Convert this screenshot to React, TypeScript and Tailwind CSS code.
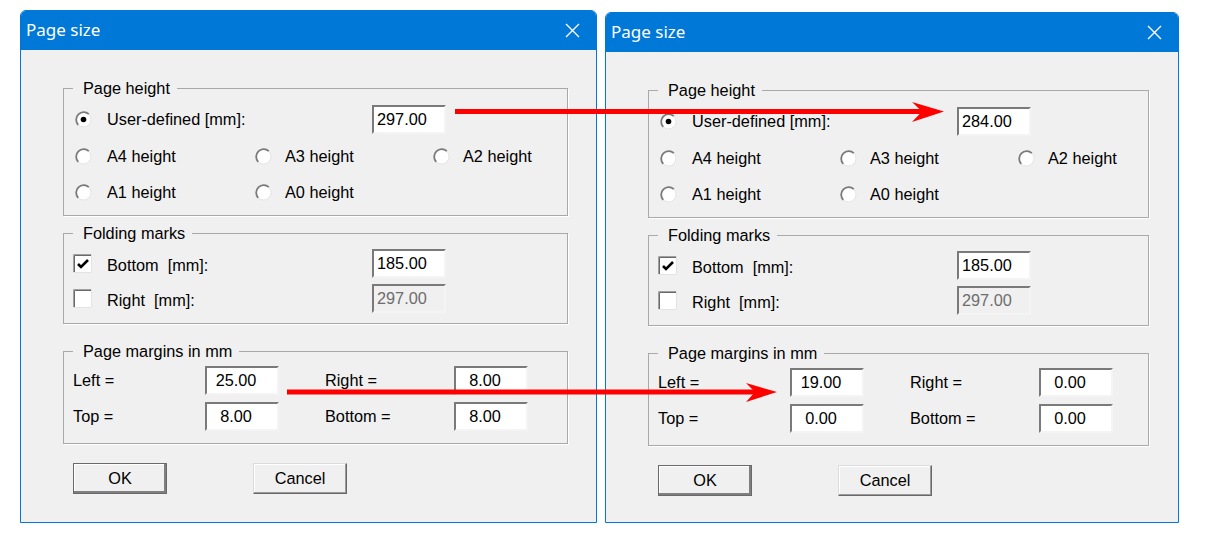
import React from 'react';

type Values = {
  height: string;
  bottom: string;
  right: string;
  left: string;
  top: string;
  mRight: string;
  mBottom: string;
};

function Radio({ checked = false }: { checked?: boolean }) {
  return (
    <svg width="17" height="17" viewBox="0 0 17 17" className="shrink-0">
      <circle cx="8.5" cy="8.5" r="7.5" fill="#fff" stroke="#e3e3e3" strokeWidth="1" />
      <path d="M 3.2 13.8 A 7.5 7.5 0 0 1 13.8 3.2" stroke="#7a7a7a" strokeWidth="1.8" fill="none" />
      {checked && <circle cx="8.5" cy="8.5" r="2.8" fill="#000" />}
    </svg>
  );
}

function Checkbox({ checked = false }: { checked?: boolean }) {
  return (
    <svg width="19" height="19" viewBox="0 0 19 19" className="shrink-0">
      <rect x="0" y="0" width="19" height="19" fill="#fff" />
      <path d="M 0.5 19 L 0.5 0.5 L 19 0.5" stroke="#a0a0a0" strokeWidth="1" fill="none" />
      <path d="M 1.5 18 L 1.5 1.5 L 18 1.5" stroke="#696969" strokeWidth="1" fill="none" />
      <path d="M 18.5 0 L 18.5 18.5 L 0 18.5" stroke="#e3e3e3" strokeWidth="1" fill="none" />
      {checked && <path d="M 5 10 L 8 13 L 15 6" stroke="#000" strokeWidth="2.6" fill="none" />}
    </svg>
  );
}

function Field({ value, disabled = false, centered = false }: { value: string; disabled?: boolean; centered?: boolean }) {
  return (
    <div
      className={`w-[74px] h-[29px] flex items-center border-2 border-t-[#7a7a7a] border-l-[#7a7a7a] border-b-[#f4f4f4] border-r-[#f4f4f4] ${
        disabled ? 'bg-[#f0f0f0] text-[#6d6d6d]' : 'bg-white text-black'
      } ${centered ? 'justify-center pr-[12px]' : 'pl-[3px]'}`}
    >
      {value}
    </div>
  );
}

function Button({ label, isDefault = false, className = '' }: { label: string; isDefault?: boolean; className?: string }) {
  return (
    <div
      className={`w-[94px] h-[31px] flex items-center justify-center bg-[#f0f0f0] ${
        isDefault
          ? 'border border-[#6a6a6a] shadow-[inset_-2px_-2px_0_#7f7f7f,inset_1px_1px_0_#fff]'
          : 'border border-t-[#dcdcdc] border-l-[#dcdcdc] border-r-[#696969] border-b-[#696969] shadow-[inset_-1px_-1px_0_#9a9a9a,inset_1px_1px_0_#fff]'
      } ${className}`}
    >
      {label}
    </div>
  );
}

function Group({ title, className = '', children }: { title: string; className?: string; children: React.ReactNode }) {
  return (
    <fieldset className={`border border-[#a9a9a9] shadow-[1px_1px_0_#fff] ${className}`}>
      <legend className="ml-[9px] pl-[10px] pr-[7px] leading-[20px]">{title}</legend>
      {children}
    </fieldset>
  );
}

function Dialog({ v, className = '', groupWidth }: { v: Values; className?: string; groupWidth: string }) {
  return (
    <div className={`flex flex-col border border-[#0078d7] rounded-t-[6px] bg-[#f0f0f0] overflow-hidden ${className}`}>
      <div className="h-[39px] shrink-0 bg-[#0078d7] flex items-center justify-between pl-[5px] pr-[16px]">
        <span className="font-['Noto_Sans',sans-serif] text-[17px] text-white leading-none pb-[2px]">Page size</span>
        <svg width="15" height="15" viewBox="0 0 15 15">
          <path d="M 1 1 L 14 14 M 14 1 L 1 14" stroke="#fff" strokeWidth="1.4" />
        </svg>
      </div>
      <div className="flex-1 pl-[42px] pt-[28px] text-[16.3px] text-black">
        <Group title="Page height" className={groupWidth}>
          <div className="pl-[11px] pt-[6px] pb-[5px]">
            <div className="h-[30px] flex items-center">
              <div className="w-[297px] flex items-center">
                <Radio checked />
                <span className="ml-[15px]">User-defined [mm]:</span>
              </div>
              <Field value={v.height} />
            </div>
            <div className="h-[36px] mt-[4px] flex items-center">
              <div className="w-[180px] flex items-center">
                <Radio />
                <span className="ml-[15px]">A4 height</span>
              </div>
              <div className="w-[178px] flex items-center">
                <Radio />
                <span className="ml-[13px]">A3 height</span>
              </div>
              <div className="flex items-center">
                <Radio />
                <span className="ml-[13px]">A2 height</span>
              </div>
            </div>
            <div className="h-[36px] flex items-center">
              <div className="w-[180px] flex items-center">
                <Radio />
                <span className="ml-[15px]">A1 height</span>
              </div>
              <div className="flex items-center">
                <Radio />
                <span className="ml-[13px]">A0 height</span>
              </div>
            </div>
          </div>
        </Group>

        <Group title="Folding marks" className={`mt-[7px] ${groupWidth}`}>
          <div className="pl-[9px] pt-[6px] pb-[10px]">
            <div className="h-[29px] flex items-center">
              <div className="w-[299px] flex items-center">
                <Checkbox checked />
                <span className="ml-[15px] pt-[3px]">Bottom&nbsp; [mm]:</span>
              </div>
              <Field value={v.bottom} />
            </div>
            <div className="h-[29px] mt-[6px] flex items-center">
              <div className="w-[299px] flex items-center">
                <Checkbox />
                <span className="ml-[15px] pt-[3px]">Right&nbsp; [mm]:</span>
              </div>
              <Field value={v.right} disabled />
            </div>
          </div>
        </Group>

        <Group title="Page margins in mm" className={`mt-[17px] ${groupWidth}`}>
          <div className="pl-[9px] pt-[5px] pb-[12px]">
            <div className="h-[29px] flex items-center">
              <span className="w-[132px]">Left =</span>
              <Field value={v.left} centered />
              <span className="ml-[46px] w-[129px]">Right =</span>
              <Field value={v.mRight} centered />
            </div>
            <div className="h-[29px] mt-[7px] flex items-center">
              <span className="w-[132px]">Top =</span>
              <Field value={v.top} centered />
              <span className="ml-[46px] w-[129px]">Bottom =</span>
              <Field value={v.mBottom} centered />
            </div>
          </div>
        </Group>

        <div className="mt-[19px] flex items-center">
          <Button label="OK" isDefault className="ml-[10px]" />
          <Button label="Cancel" className="ml-[86px]" />
        </div>
      </div>
    </div>
  );
}

export default function App() {
  const before: Values = { height: '297.00', bottom: '185.00', right: '297.00', left: '25.00', top: '8.00', mRight: '8.00', mBottom: '8.00' };
  const after: Values = { height: '284.00', bottom: '185.00', right: '297.00', left: '19.00', top: '0.00', mRight: '0.00', mBottom: '0.00' };

  return (
    <div className="relative w-[1219px] h-[549px] bg-white overflow-hidden font-['Liberation_Sans',Arial,sans-serif]">
      <div className="flex items-start pl-[20px] pt-[10px] gap-[8px]">
        <Dialog v={before} groupWidth="w-[505px]" className="w-[577px] h-[513px]" />
        <Dialog v={after} groupWidth="w-[501px]" className="w-[574px] h-[511px] mt-[2px]" />
      </div>
      <svg className="absolute inset-0 pointer-events-none" width="1219" height="549" viewBox="0 0 1219 549">
        <line x1="455" y1="111.5" x2="925" y2="111.5" stroke="#ff0000" strokeWidth="5" />
        <polygon points="944,111.5 912,102 922,111.5 912,122" fill="#ff0000" />
        <line x1="287" y1="392" x2="760" y2="392" stroke="#ff0000" strokeWidth="5" />
        <polygon points="777,392 746,383 755,392 746,402" fill="#ff0000" />
      </svg>
    </div>
  );
}
